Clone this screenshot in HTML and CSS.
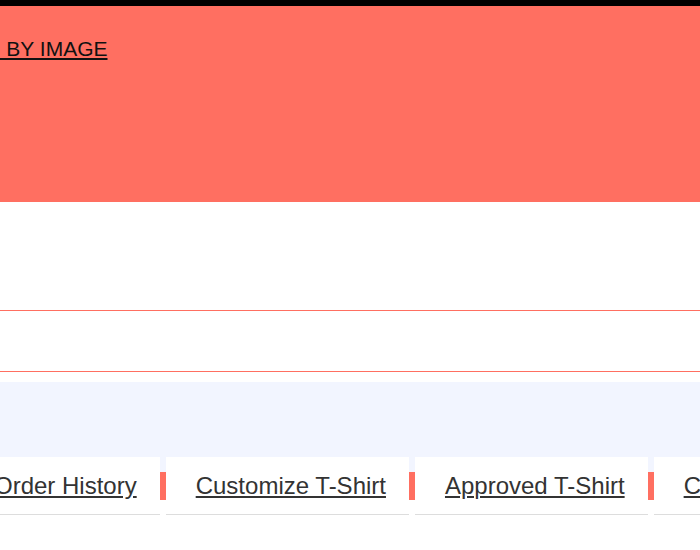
FILE: index.html
```html
<!DOCTYPE html>
<html>
<head>
<meta charset="utf-8">
<link rel="stylesheet" href="styles.css">
</head>
<body>
<div class="topbar"></div>
<section class="hero">
  <a class="hero-link" href="#">SEARCH BY IMAGE</a>
</section>
<section class="spacer"></section>
<div class="search-box"></div>
<section class="band"></section>
<nav class="tabs">
  <a class="tab" href="#">Order History</a>
  <span class="sep"></span>
  <a class="tab" href="#">Customize T-Shirt</a>
  <span class="sep"></span>
  <a class="tab" href="#">Approved T-Shirt</a>
  <span class="sep"></span>
  <a class="tab" href="#">Completed Orders</a>
</nav>
</body>
</html>
```
FILE: styles.css
```css
html, body {
  margin: 0;
  padding: 0;
  background: #ffffff;
  overflow: hidden;
  width: 700px;
  height: 550px;
  font-family: "Liberation Sans", Arial, sans-serif;
}
.topbar {
  height: 6px;
  background: #000000;
}
.hero {
  height: 196px;
  background: #ff6f61;
  box-sizing: border-box;
  padding-top: 31px;
  white-space: nowrap;
}
.hero-link {
  display: inline-block;
  margin-left: -87px;
  font-size: 21px;
  line-height: 24px;
  color: #111111;
  text-decoration: underline;
}
.spacer {
  height: 108px;
}
.search-box {
  height: 60px;
  border-top: 1px solid #ff6f61;
  border-bottom: 1px solid #ff6f61;
  margin-bottom: 10px;
}
.band {
  height: 90px;
  background: #f2f5ff;
}
.tabs {
  display: flex;
  margin-top: -15px;
  margin-left: -36px;
  white-space: nowrap;
  position: relative;
}
.tab {
  flex-shrink: 0;
  background: #ffffff;
  height: 57px;
  line-height: 57px;
  padding: 0 23px 0 30px;
  border-bottom: 1px solid #dddddd;
  font-size: 24px;
  color: #333333;
  text-decoration: underline;
}
.sep {
  flex-shrink: 0;
  width: 6px;
  height: 28px;
  margin-top: 15px;
  background: #ff6f61;
}
```
